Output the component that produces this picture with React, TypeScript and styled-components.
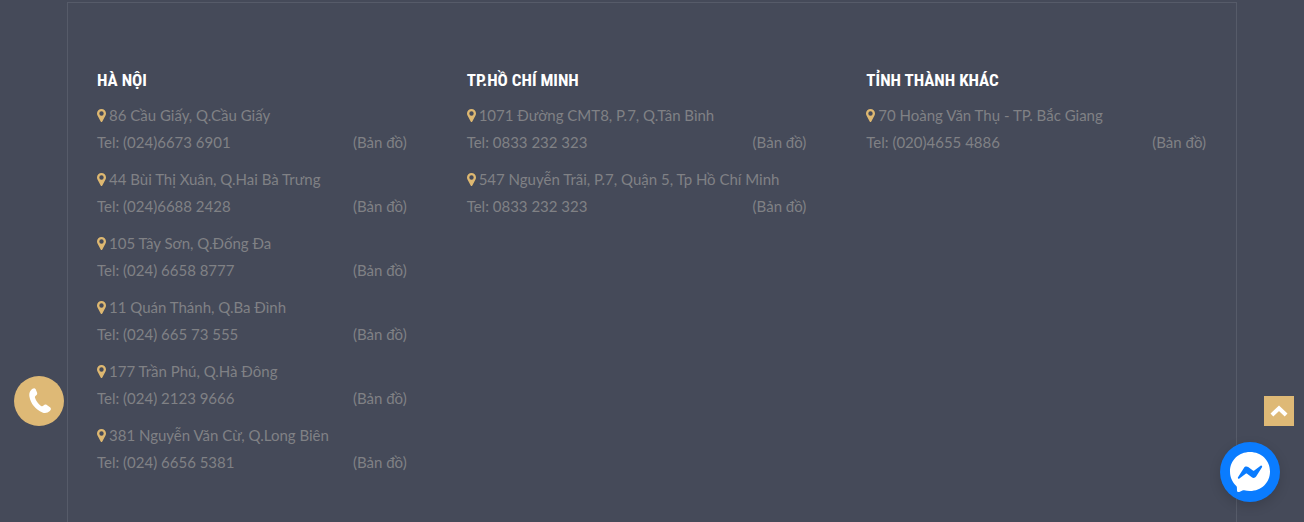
import React from 'react';
import styled, { createGlobalStyle } from 'styled-components';

const GlobalStyle = createGlobalStyle`
  *, *::before, *::after { box-sizing: border-box; }
  body {
    margin: 0;
    background: #454a59;
    color: #808185;
    font: 15px/27px Lato, "Noto Sans", sans-serif;
  }
`;

const Footer = styled.footer`
  padding-top: 2px;
`;

const Frame = styled.div`
  display: grid;
  grid-template-columns: 31fr 34fr 34fr;
  gap: 60px;
  max-width: 1170px;
  min-height: calc(100vh - 2px);
  margin: 0 auto;
  padding: 62px 30px 36px 29px;
  border: 1px solid #565b69;
  border-bottom: 0;
`;

const Region = styled.section`
  min-width: 0;
`;

const Heading = styled.h2`
  margin: 0 0 7px;
  color: #fff;
  font: bold 17px/30px "Roboto Condensed", Roboto, sans-serif;
  text-transform: uppercase;
`;

const Branches = styled.ul`
  list-style: none;
  margin: 0;
  padding: 0;
`;

const Branch = styled.li`
  margin-bottom: 10px;
`;

const Address = styled.div`
  display: flex;
  align-items: center;
  gap: 3px;
`;

const Contact = styled.div`
  display: flex;
  justify-content: space-between;
`;

const MapLink = styled.a`
  color: inherit;
  text-decoration: none;
`;

const PinIcon = styled.svg`
  flex: none;
  width: 9px;
  height: 13px;
  fill: #deb871;
`;

const CallLink = styled.a`
  position: fixed;
  left: 14px;
  bottom: 96px;
  display: grid;
  place-items: center;
  width: 50px;
  height: 50px;
  border-radius: 50%;
  background: #deb976;
`;

const TopButton = styled.button`
  position: fixed;
  right: 10px;
  bottom: 96px;
  display: grid;
  place-items: center;
  width: 30px;
  height: 30px;
  padding: 0;
  border: 0;
  background: #deb976;
  cursor: pointer;
`;

const ChatButton = styled.button`
  position: fixed;
  right: 24px;
  bottom: 20px;
  width: 60px;
  height: 60px;
  padding: 0;
  border: 0;
  border-radius: 50%;
  background: #0a7cff;
  box-shadow: 0 4px 12px rgba(0, 0, 0, 0.15);
  cursor: pointer;
`;

type Office = { address: string; tel: string };

const regions: { name: string; offices: Office[] }[] = [
  {
    name: 'Hà Nội',
    offices: [
      { address: '86 Cầu Giấy, Q.Cầu Giấy', tel: '(024)6673 6901' },
      { address: '44 Bùi Thị Xuân, Q.Hai Bà Trưng', tel: '(024)6688 2428' },
      { address: '105 Tây Sơn, Q.Đống Đa', tel: '(024) 6658 8777' },
      { address: '11 Quán Thánh, Q.Ba Đình', tel: '(024) 665 73 555' },
      { address: '177 Trần Phú, Q.Hà Đông', tel: '(024) 2123 9666' },
      { address: '381 Nguyễn Văn Cừ, Q.Long Biên', tel: '(024) 6656 5381' },
    ],
  },
  {
    name: 'TP.Hồ Chí Minh',
    offices: [
      { address: '1071 Đường CMT8, P.7, Q.Tân Bình', tel: '0833 232 323' },
      { address: '547 Nguyễn Trãi, P.7, Quận 5, Tp Hồ Chí Minh', tel: '0833 232 323' },
    ],
  },
  {
    name: 'Tỉnh thành khác',
    offices: [{ address: '70 Hoàng Văn Thụ - TP. Bắc Giang', tel: '(020)4655 4886' }],
  },
];

export default function App() {
  return (
    <>
      <GlobalStyle />
      <Footer>
        <Frame>
          {regions.map((region) => (
            <Region key={region.name}>
              <Heading>{region.name}</Heading>
              <Branches>
                {region.offices.map((office) => (
                  <Branch key={office.address}>
                    <Address>
                      <PinIcon viewBox="0 0 9 13" aria-hidden="true">
                        <path
                          fillRule="evenodd"
                          d="M4.5 0A4.5 4.5 0 0 1 9 4.5C9 5.3 8.8 5.9 8.5 6.5L5.3 12.4C5 13.1 4 13.1 3.7 12.4L.5 6.5C.2 5.9 0 5.3 0 4.5A4.5 4.5 0 0 1 4.5 0ZM4.5 2.3A2.2 2.2 0 1 0 4.5 6.7A2.2 2.2 0 1 0 4.5 2.3Z"
                        />
                      </PinIcon>
                      <span>{office.address}</span>
                    </Address>
                    <Contact>
                      <span>Tel: {office.tel}</span>
                      <MapLink href="#map">(Bản đồ)</MapLink>
                    </Contact>
                  </Branch>
                ))}
              </Branches>
            </Region>
          ))}
        </Frame>
      </Footer>
      <CallLink href="tel:0833232323" aria-label="Gọi điện">
        <svg width="24" height="28" viewBox="-1 0 24 28" fill="#fff" aria-hidden="true">
          <path d="M3.2 3.1C4.4 1.4 6.6.6 7.7 2.2L9 5.4C9.5 6.8 9 7.7 7.7 8.7C6.8 9.4 6.7 10 7.1 11.1C8.1 14.2 10.2 17 13 18.9C14 19.5 14.7 19.4 15.5 18.6C16.6 17.4 17.7 17.3 18.8 18L22 20.2C23.3 21.2 23.2 22.8 21.8 24.1C19.8 26 16.9 26.5 14.4 25.5C7.7 22.8 2.5 16.6 1.4 9.6C1 7.2 1.5 4.9 3.2 3.1Z" />
        </svg>
      </CallLink>
      <TopButton type="button" aria-label="Lên đầu trang">
        <svg width="18" height="12" viewBox="0 0 18 12" fill="none" stroke="#fff" strokeWidth="4" aria-hidden="true">
          <path d="M1.9 10L9 3.2L16.1 10" />
        </svg>
      </TopButton>
      <ChatButton type="button" aria-label="Messenger">
        <svg width="60" height="60" viewBox="0 0 60 60" aria-hidden="true">
          <path
            fill="#fff"
            d="M30 10C18.7 10 10 18.3 10 29.5C10 35.3 12.4 40.4 16.3 43.9C16.8 44.5 16.9 45 16.9 45.6L17 48.5C17 49.7 18.2 50.4 19.3 49.9L23 48.3C23.4 48.1 23.8 48.1 24.2 48.2C26 48.7 28 49 30 49C41.3 49 50 40.7 50 29.5S41.3 10 30 10Z"
          />
          <path
            fill="#0a7cff"
            d="M18 35.2L23.9 25.9C24.8 24.4 26.8 24 28.2 25.1L32.9 28.6C33.3 28.9 33.9 28.9 34.3 28.6L40.6 23.8C41.5 23.1 42.6 24.2 42 25.2L36.1 34.5C35.2 36 33.2 36.4 31.8 35.3L27.1 31.8C26.7 31.5 26.1 31.5 25.7 31.8L19.4 36.6C18.5 37.3 17.4 36.2 18 35.2Z"
          />
        </svg>
      </ChatButton>
    </>
  );
}
